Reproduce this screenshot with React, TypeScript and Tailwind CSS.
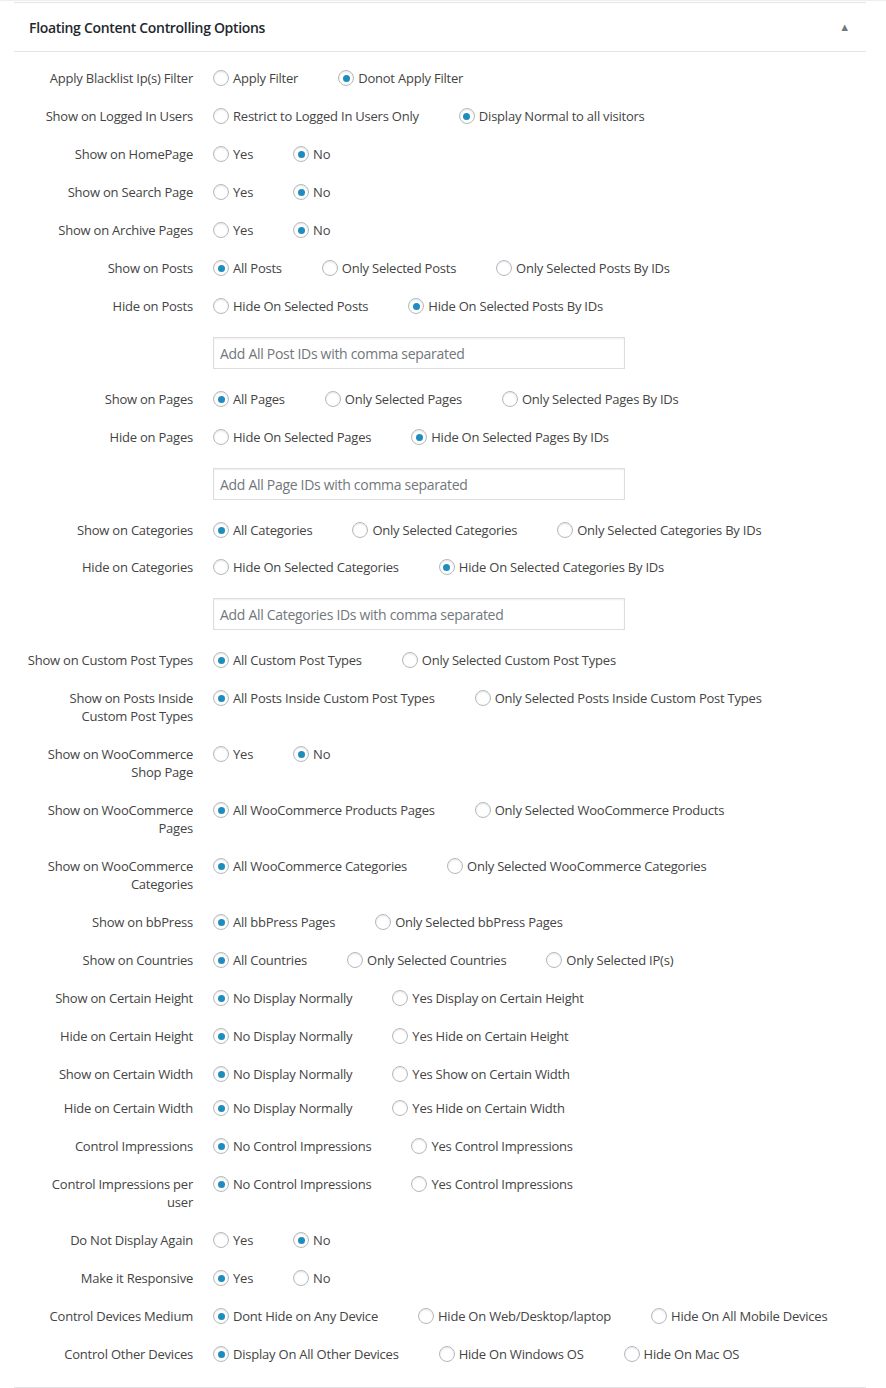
import React from "react";

type Row = {
  label: string[];
  options: string[];
  checked: number;
  input?: string;
  tight?: number;
};

const rows: Row[] = [
  { label: ["Apply Blacklist Ip(s) Filter"], options: ["Apply Filter", "Donot Apply Filter"], checked: 1 },
  { label: ["Show on Logged In Users"], options: ["Restrict to Logged In Users Only", "Display Normal to all visitors"], checked: 1 },
  { label: ["Show on HomePage"], options: ["Yes", "No"], checked: 1 },
  { label: ["Show on Search Page"], options: ["Yes", "No"], checked: 1 },
  { label: ["Show on Archive Pages"], options: ["Yes", "No"], checked: 1 },
  { label: ["Show on Posts"], options: ["All Posts", "Only Selected Posts", "Only Selected Posts By IDs"], checked: 0 },
  {
    label: ["Hide on Posts"],
    options: ["Hide On Selected Posts", "Hide On Selected Posts By IDs"],
    checked: 1,
    input: "Add All Post IDs with comma separated",
  },
  { label: ["Show on Pages"], options: ["All Pages", "Only Selected Pages", "Only Selected Pages By IDs"], checked: 0 },
  {
    label: ["Hide on Pages"],
    options: ["Hide On Selected Pages", "Hide On Selected Pages By IDs"],
    checked: 1,
    input: "Add All Page IDs with comma separated",
  },
  {
    label: ["Show on Categories"],
    options: ["All Categories", "Only Selected Categories", "Only Selected Categories By IDs"],
    checked: 0,
  },
  {
    label: ["Hide on Categories"],
    options: ["Hide On Selected Categories", "Hide On Selected Categories By IDs"],
    checked: 1,
    input: "Add All Categories IDs with comma separated",
    tight: 1,
  },
  { label: ["Show on Custom Post Types"], options: ["All Custom Post Types", "Only Selected Custom Post Types"], checked: 0 },
  {
    label: ["Show on Posts Inside", "Custom Post Types"],
    options: ["All Posts Inside Custom Post Types", "Only Selected Posts Inside Custom Post Types"],
    checked: 0,
  },
  { label: ["Show on WooCommerce", "Shop Page"], options: ["Yes", "No"], checked: 1 },
  {
    label: ["Show on WooCommerce", "Pages"],
    options: ["All WooCommerce Products Pages", "Only Selected WooCommerce Products"],
    checked: 0,
  },
  {
    label: ["Show on WooCommerce", "Categories"],
    options: ["All WooCommerce Categories", "Only Selected WooCommerce Categories"],
    checked: 0,
  },
  { label: ["Show on bbPress"], options: ["All bbPress Pages", "Only Selected bbPress Pages"], checked: 0 },
  {
    label: ["Show on Countries"],
    options: ["All Countries", "Only Selected Countries", "Only Selected IP(s)"],
    checked: 0,
  },
  { label: ["Show on Certain Height"], options: ["No Display Normally", "Yes Display on Certain Height"], checked: 0 },
  { label: ["Hide on Certain Height"], options: ["No Display Normally", "Yes Hide on Certain Height"], checked: 0 },
  { label: ["Show on Certain Width"], options: ["No Display Normally", "Yes Show on Certain Width"], checked: 0 },
  { label: ["Hide on Certain Width"], options: ["No Display Normally", "Yes Hide on Certain Width"], checked: 0, tight: 4 },
  { label: ["Control Impressions"], options: ["No Control Impressions", "Yes Control Impressions"], checked: 0 },
  {
    label: ["Control Impressions per", "user"],
    options: ["No Control Impressions", "Yes Control Impressions"],
    checked: 0,
  },
  { label: ["Do Not Display Again"], options: ["Yes", "No"], checked: 1 },
  { label: ["Make it Responsive"], options: ["Yes", "No"], checked: 0 },
  {
    label: ["Control Devices Medium"],
    options: ["Dont Hide on Any Device", "Hide On Web/Desktop/laptop", "Hide On All Mobile Devices"],
    checked: 0,
  },
  {
    label: ["Control Other Devices"],
    options: ["Display On All Other Devices", "Hide On Windows OS", "Hide On Mac OS"],
    checked: 0,
  },
];

function Radio({ on }: { on: boolean }) {
  return (
    <span className="flex h-4 w-4 shrink-0 items-center justify-center rounded-full border border-[#b4b9be] bg-white shadow-[inset_0_1px_2px_rgba(0,0,0,0.1)]">
      {on && <span className="h-[7px] w-[7px] rounded-full bg-[#1e8cbe]" />}
    </span>
  );
}

function OptionRow({ row }: { row: Row }) {
  return (
    <>
      <div className="flex items-start pb-[10px]" style={{ paddingTop: 10 - (row.tight ?? 0) }}>
        <div className="w-[179px] shrink-0 text-right leading-[18px]">
          {row.label.map((l) => (
            <div key={l} className="whitespace-nowrap">
              {l}
            </div>
          ))}
        </div>
        <div className="ml-5 flex shrink-0 items-center whitespace-nowrap">
          {row.options.map((o, i) => (
            <label key={o} className="mr-10 flex shrink-0 items-center gap-1 leading-[18px]">
              <Radio on={i === row.checked} />
              <span>{o}</span>
            </label>
          ))}
        </div>
      </div>
      {row.input && (
        <div className="pb-[11px] pl-[199px] pt-[12px]">
          <div className="flex h-8 w-[412px] items-center border border-[#ddd] px-[6px] text-[14px] tracking-[-0.3px] text-[#72777c] shadow-[inset_0_1px_2px_rgba(0,0,0,0.07)]">
            {row.input}
          </div>
        </div>
      )}
    </>
  );
}

export default function App() {
  return (
    <div className="min-h-[1388px] overflow-hidden bg-white font-['Open_Sans',sans-serif] text-[13px] tracking-[-0.22px] text-[#444]">
      <div className="h-[2px] border-t border-[#eceef0]" />
      <div className="ml-[14px] w-[852px] border-t border-[#e2e4e7]">
        <div className="flex h-[49px] items-center justify-between border-b border-[#e2e4e7] pl-[15px] pr-[16px]">
          <h2 className="text-[14px] font-semibold tracking-[-0.32px] text-[#23282d]">Floating Content Controlling Options</h2>
          <span className="text-[11px] text-[#72777c]">▲</span>
        </div>
        <div className="border-b border-[#e2e4e7] pb-[14px] pt-[7px]">
          {rows.map((r) => (
            <OptionRow key={r.label.join(" ")} row={r} />
          ))}
        </div>
      </div>
    </div>
  );
}
